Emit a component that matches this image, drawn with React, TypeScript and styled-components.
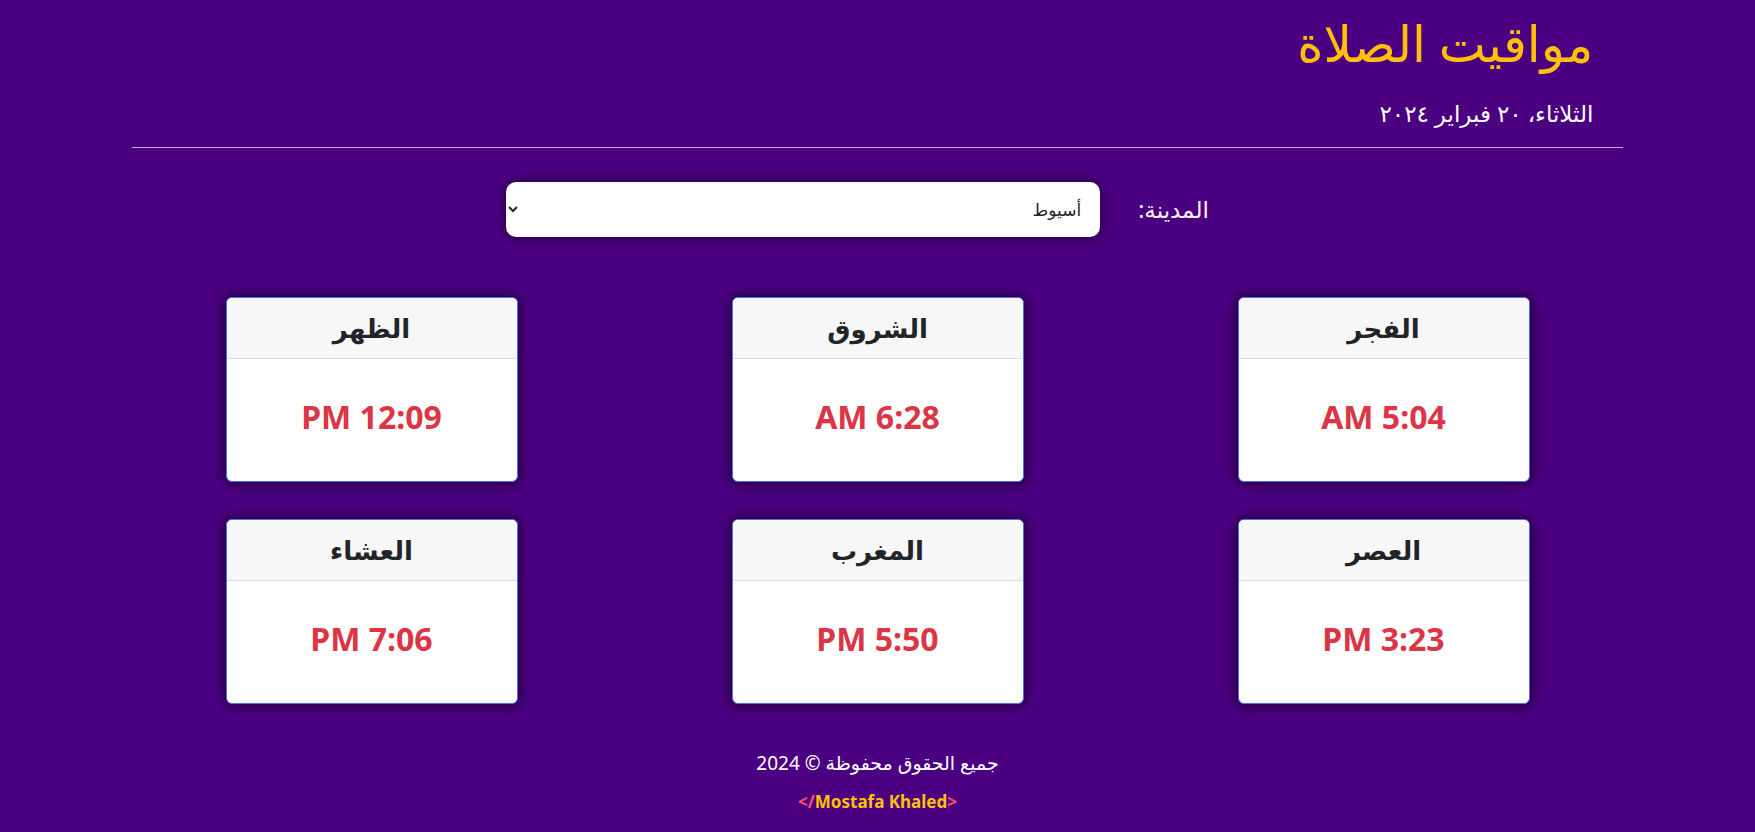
import React from "react";
import styled, { createGlobalStyle } from "styled-components";

const Global = createGlobalStyle`
  * { box-sizing: border-box; }
  html, body { margin: 0; padding: 0; }
  body {
    background: #4b0082;
    font-family: "Noto Sans", "DejaVu Sans", sans-serif;
    color: #fff;
  }
`;

const Page = styled.div`
  direction: rtl;
  width: 85%;
  margin: 0 auto;
`;

const Header = styled.header`
  padding: 13px 30px 0 30px;
`;

const Title = styled.h1`
  margin: 0;
  font-size: 50px;
  font-weight: 500;
  line-height: 1.2;
  color: #ffc107;
`;

const DateLine = styled.div`
  margin-top: 23px;
  font-size: 23px;
  line-height: 1.5;
  color: #fff;
`;

const Divider = styled.hr`
  margin: 16px 0 0 0;
  border: 0;
  border-top: 1px solid #c9a9ee;
`;

const CityRow = styled.div`
  display: flex;
  justify-content: center;
  align-items: center;
  margin-top: 34px;
`;

const CityLabel = styled.label`
  font-size: 23px;
  color: #fbf4ff;
  margin: 0 40px 0 38px;
`;

const CitySelect = styled.select`
  width: 594px;
  height: 55px;
  border: none;
  border-radius: 10px;
  background: #fff;
  padding: 0 15px 0 10px;
  font-family: "Noto Sans", "DejaVu Sans", sans-serif;
  font-size: 17px;
  color: #212529;
  box-shadow: 0 0 12px 2px rgba(0, 0, 0, 0.45);
  outline: none;
`;

const CardGrid = styled.div`
  display: grid;
  grid-template-columns: repeat(3, 292px);
  justify-content: center;
  column-gap: 214px;
  row-gap: 37px;
  margin-top: 60px;
`;

const Card = styled.div`
  height: 185px;
  background: #fff;
  border: 1px solid #4d6ef0;
  border-radius: 6px;
  overflow: hidden;
  box-shadow: 0 0 12px 3px rgba(0, 0, 0, 0.5);
  display: flex;
  flex-direction: column;
`;

const CardHeader = styled.div`
  height: 61px;
  flex: none;
  background: #f7f7f7;
  border-bottom: 1px solid #dedede;
  display: flex;
  align-items: center;
  justify-content: center;
  font-size: 26px;
  font-weight: 700;
  color: #212529;
`;

const CardBody = styled.div`
  flex: 1;
  display: flex;
  align-items: center;
  justify-content: center;
  padding-bottom: 6px;
  font-size: 32px;
  font-weight: 700;
  color: #dc3545;
  direction: ltr;
`;

const Footer = styled.footer`
  margin-top: 46px;
  text-align: center;
  padding-bottom: 20px;
`;

const Copy = styled.div`
  font-size: 19px;
  color: #fff;
  line-height: 26px;
`;

const Credit = styled.div`
  margin-top: 14px;
  direction: ltr;
  font-size: 17px;
  font-weight: 700;
  line-height: 24px;
`;

const Bracket = styled.span`
  color: #ff4d6d;
`;

const Name = styled.span`
  color: #ffc107;
`;

const prayers = [
  { name: "الفجر", time: "AM 5:04" },
  { name: "الشروق", time: "AM 6:28" },
  { name: "الظهر", time: "PM 12:09" },
  { name: "العصر", time: "PM 3:23" },
  { name: "المغرب", time: "PM 5:50" },
  { name: "العشاء", time: "PM 7:06" },
];

export default function App() {
  return (
    <>
      <Global />
      <Page>
        <Header>
          <Title>مواقيت الصلاة</Title>
          <DateLine>الثلاثاء، ٢٠ فبراير ٢٠٢٤</DateLine>
        </Header>
        <Divider />
        <CityRow>
          <CityLabel htmlFor="city">المدينة:</CityLabel>
          <CitySelect id="city" defaultValue="assiut">
            <option value="assiut">أسيوط</option>
            <option value="cairo">القاهرة</option>
            <option value="alex">الإسكندرية</option>
          </CitySelect>
        </CityRow>
        <CardGrid>
          {prayers.map((p) => (
            <Card key={p.name}>
              <CardHeader>{p.name}</CardHeader>
              <CardBody>{p.time}</CardBody>
            </Card>
          ))}
        </CardGrid>
        <Footer>
          <Copy>جميع الحقوق محفوظة © 2024</Copy>
          <Credit>
            <Bracket>&lt;/</Bracket>
            <Name>Mostafa Khaled</Name>
            <Bracket>&gt;</Bracket>
          </Credit>
        </Footer>
      </Page>
    </>
  );
}
